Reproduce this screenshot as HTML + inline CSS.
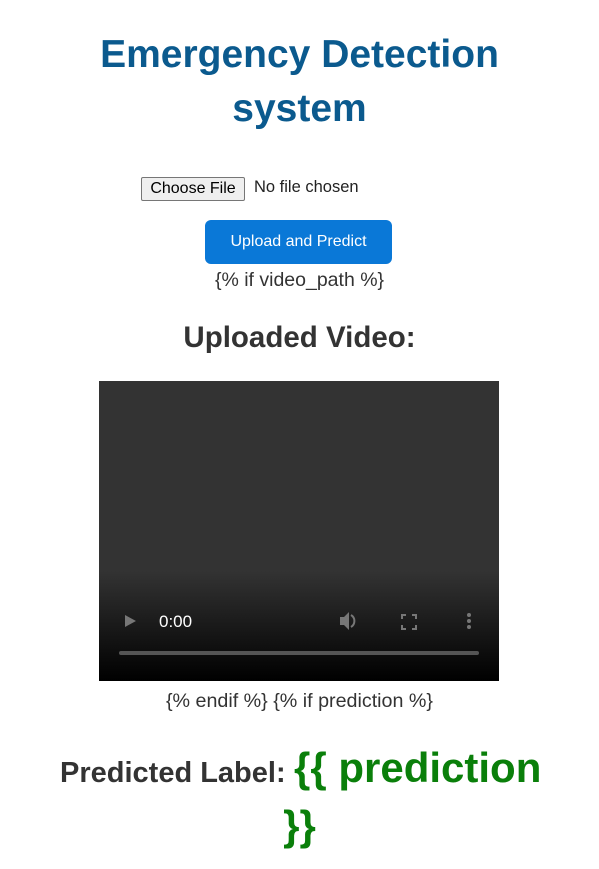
<!DOCTYPE html>
<html><head><meta charset="utf-8"><style>
body{margin:0;width:599px;height:869px;background:#fff;font-family:"Liberation Sans",Arial,sans-serif;position:relative;overflow:hidden;color:#333}
.a{position:absolute;white-space:nowrap}
.c{left:0;width:599px;text-align:center}
</style></head><body>
<div class="a c" style="top:28px;font-size:39px;font-weight:bold;color:#0b5a8e;line-height:54px">Emergency Detection<br>system</div>
<div class="a" style="left:141px;top:177px;width:102px;height:22px;border:1px solid #767676;border-radius:2px;background:#efefef;font-size:16px;color:#000;text-align:center;line-height:22px">Choose File</div>
<div class="a" style="left:254px;top:177px;font-size:16.5px;color:#222;line-height:20px">No file chosen</div>
<div class="a" style="left:205px;top:220px;width:187px;height:44px;border-radius:6px;background:#0a78d7;color:#fff;font-size:16px;text-align:center;line-height:43px">Upload and Predict</div>
<div class="a c" style="top:269px;font-size:19.5px;line-height:22px">{% if video_path %}</div>
<div class="a c" style="top:320px;font-size:29.5px;font-weight:bold;line-height:36px">Uploaded Video:</div>
<div class="a" style="left:99px;top:381px;width:400px;height:300px;background:linear-gradient(#333 0,#333 190px,#000 300px)">
<svg width="400" height="300" style="position:absolute;left:0;top:0">
<polygon points="26,234 26,246 37,240" fill="#777"/>
<text x="60" y="246" fill="#fff" font-family="Liberation Sans,Arial" font-size="17">0:00</text>
<path d="M241,236h4l5,-5v18l-5,-5h-4z" fill="#777"/>
<path d="M252,234a7,7 0 0 1 0,12" stroke="#777" stroke-width="2" fill="none"/>
<path d="M303,238v-4h4M313,234h4v4M317,244v4h-4M307,248h-4v-4" stroke="#777" stroke-width="2" fill="none"/>
<circle cx="370" cy="234" r="2" fill="#777"/><circle cx="370" cy="240" r="2" fill="#777"/><circle cx="370" cy="246" r="2" fill="#777"/>
<rect x="20" y="270" width="360" height="4" rx="2" fill="#555"/>
</svg></div>
<div class="a c" style="top:690px;font-size:19.7px;line-height:22px">{% endif %} {% if prediction %}</div>
<div class="a" style="left:60px;top:755px;font-size:29px;font-weight:bold;line-height:36px">Predicted Label:</div>
<div class="a" style="left:294px;top:744px;font-size:42px;font-weight:bold;color:#0a7f0a;line-height:48px">{{ prediction</div>
<div class="a c" style="top:802px;font-size:42px;font-weight:bold;color:#0a7f0a;line-height:48px">}}</div>
</body></html>
